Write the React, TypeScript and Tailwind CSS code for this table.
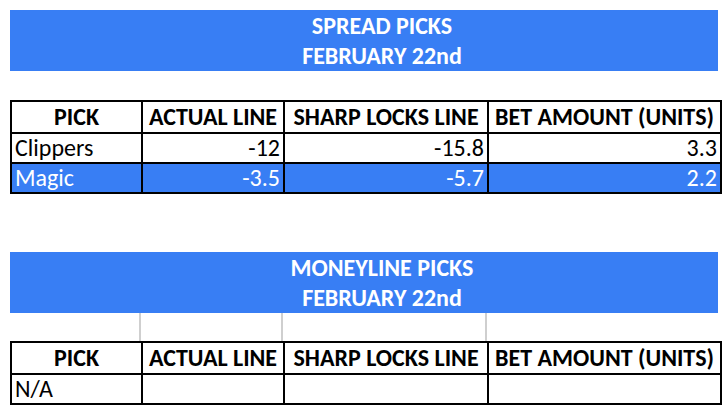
const cols = ["w-[131px]", "w-[142px]", "w-[204px]", "w-[233px]"];
const headers = ["PICK", "ACTUAL LINE", "SHARP LOCKS LINE", "BET AMOUNT (UNITS)"];

function Banner({ title }: { title: string }) {
  return (
    <div className="bg-[#387ef4] h-[61px] flex flex-col items-center justify-center pl-[36px] text-white font-bold text-[24px] leading-[30px]">
      <div>{title}</div>
      <div>FEBRUARY 22nd</div>
    </div>
  );
}

function HeaderRow() {
  return (
    <tr className="h-[32px]">
      {headers.map((h, i) => (
        <th key={h} className={`${cols[i]} border-2 border-black font-bold text-[24px] text-black text-center px-0 py-0 leading-none whitespace-nowrap`}>
          {h}
        </th>
      ))}
    </tr>
  );
}

type Row = { cells: string[]; hl?: boolean };

function PickTable({ rows }: { rows: Row[] }) {
  return (
    <table className="w-[710px] border-collapse table-fixed">
      <thead>
        <HeaderRow />
      </thead>
      <tbody>
        {rows.map((r, ri) => (
          <tr key={ri} className={`h-[30px] ${r.hl ? "bg-[#387ef4] text-white" : "text-black"}`}>
            {r.cells.map((c, i) => (
              <td key={i} className={`border-2 border-black text-[24px] leading-none px-[3px] py-0 ${i === 0 ? "text-left" : "text-right"}`}>
                {c}
              </td>
            ))}
          </tr>
        ))}
      </tbody>
    </table>
  );
}

export default function App() {
  return (
    <div className="w-[728px] h-[414px] bg-white p-[10px] font-['Carlito','Lato','Open_Sans',sans-serif]">
      <Banner title="SPREAD PICKS" />
      <div className="h-[29px]" />
      <PickTable
        rows={[
          { cells: ["Clippers", "-12", "-15.8", "3.3"] },
          { cells: ["Magic", "-3.5", "-5.7", "2.2"], hl: true },
        ]}
      />
      <div className="h-[58px]" />
      <Banner title="MONEYLINE PICKS" />
      <div className="flex h-[28px]">
        <div className="w-[131px] border-r-2 border-[#cfcfcf]" />
        <div className="w-[142px] border-r-2 border-[#cfcfcf]" />
        <div className="w-[204px] border-r-2 border-[#cfcfcf]" />
      </div>
      <PickTable rows={[{ cells: ["N/A", "", "", ""] }]} />
    </div>
  );
}
